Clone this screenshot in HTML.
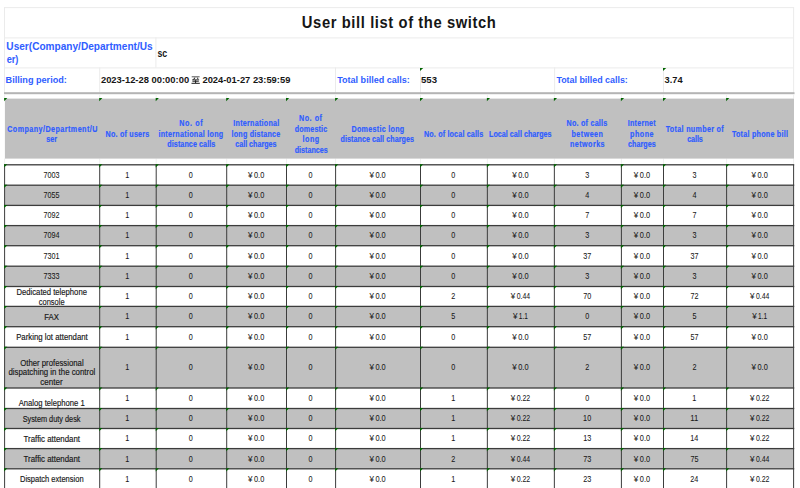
<!DOCTYPE html><html><head><meta charset="utf-8"><style>html,body{margin:0;padding:0;background:#fff;width:800px;height:488px;overflow:hidden}svg{display:block}text{font-family:"Liberation Sans",sans-serif}</style></head><body>
<svg width="800" height="488" viewBox="0 0 800 488">
<rect x="0" y="0" width="800" height="488" fill="#fff"/>
<rect x="4.50" y="7.10" width="789.10" height="1.00" fill="#ebebeb"/>
<rect x="4.50" y="37.40" width="789.10" height="1.00" fill="#ebebeb"/>
<rect x="4.50" y="67.40" width="789.10" height="1.00" fill="#ebebeb"/>
<rect x="4.00" y="7.00" width="1.00" height="87.00" fill="#ebebeb"/>
<rect x="793.10" y="7.00" width="1.00" height="87.00" fill="#ebebeb"/>
<rect x="155.40" y="37.50" width="1.00" height="30.00" fill="#ebebeb"/>
<rect x="99.20" y="67.50" width="1.00" height="25.50" fill="#ebebeb"/>
<rect x="335.00" y="67.50" width="1.00" height="25.50" fill="#ebebeb"/>
<rect x="420.00" y="67.50" width="1.00" height="25.50" fill="#ebebeb"/>
<rect x="554.10" y="67.50" width="1.00" height="25.50" fill="#ebebeb"/>
<rect x="663.00" y="67.50" width="1.00" height="25.50" fill="#ebebeb"/>
<rect x="4.00" y="92.20" width="790.50" height="2.00" fill="#b4b4b4"/>
<rect x="4.10" y="94.00" width="1.00" height="4.50" fill="#efefef"/>
<rect x="4.10" y="158.50" width="1.00" height="6.00" fill="#efefef"/>
<rect x="99.20" y="94.00" width="1.00" height="4.50" fill="#efefef"/>
<rect x="99.20" y="158.50" width="1.00" height="6.00" fill="#efefef"/>
<rect x="155.70" y="94.00" width="1.00" height="4.50" fill="#efefef"/>
<rect x="155.70" y="158.50" width="1.00" height="6.00" fill="#efefef"/>
<rect x="226.20" y="94.00" width="1.00" height="4.50" fill="#efefef"/>
<rect x="226.20" y="158.50" width="1.00" height="6.00" fill="#efefef"/>
<rect x="286.00" y="94.00" width="1.00" height="4.50" fill="#efefef"/>
<rect x="286.00" y="158.50" width="1.00" height="6.00" fill="#efefef"/>
<rect x="335.10" y="94.00" width="1.00" height="4.50" fill="#efefef"/>
<rect x="335.10" y="158.50" width="1.00" height="6.00" fill="#efefef"/>
<rect x="420.00" y="94.00" width="1.00" height="4.50" fill="#efefef"/>
<rect x="420.00" y="158.50" width="1.00" height="6.00" fill="#efefef"/>
<rect x="486.85" y="94.00" width="1.00" height="4.50" fill="#efefef"/>
<rect x="486.85" y="158.50" width="1.00" height="6.00" fill="#efefef"/>
<rect x="553.85" y="94.00" width="1.00" height="4.50" fill="#efefef"/>
<rect x="553.85" y="158.50" width="1.00" height="6.00" fill="#efefef"/>
<rect x="620.90" y="94.00" width="1.00" height="4.50" fill="#efefef"/>
<rect x="620.90" y="158.50" width="1.00" height="6.00" fill="#efefef"/>
<rect x="663.00" y="94.00" width="1.00" height="4.50" fill="#efefef"/>
<rect x="663.00" y="158.50" width="1.00" height="6.00" fill="#efefef"/>
<rect x="726.10" y="94.00" width="1.00" height="4.50" fill="#efefef"/>
<rect x="726.10" y="158.50" width="1.00" height="6.00" fill="#efefef"/>
<rect x="793.10" y="94.00" width="1.00" height="4.50" fill="#efefef"/>
<rect x="793.10" y="158.50" width="1.00" height="6.00" fill="#efefef"/>
<rect x="4.9" y="98.6" width="789.10" height="60.00" fill="#c0c0c0"/>
<rect x="4.60" y="164.80" width="789.00" height="20.40" fill="#ffffff"/>
<rect x="4.60" y="185.20" width="789.00" height="20.20" fill="#c0c0c0"/>
<rect x="4.60" y="205.40" width="789.00" height="20.20" fill="#ffffff"/>
<rect x="4.60" y="225.60" width="789.00" height="20.10" fill="#c0c0c0"/>
<rect x="4.60" y="245.70" width="789.00" height="20.50" fill="#ffffff"/>
<rect x="4.60" y="266.20" width="789.00" height="20.30" fill="#c0c0c0"/>
<rect x="4.60" y="286.50" width="789.00" height="19.90" fill="#ffffff"/>
<rect x="4.60" y="306.40" width="789.00" height="20.30" fill="#c0c0c0"/>
<rect x="4.60" y="326.70" width="789.00" height="20.60" fill="#ffffff"/>
<rect x="4.60" y="347.30" width="789.00" height="40.70" fill="#c0c0c0"/>
<rect x="4.60" y="388.00" width="789.00" height="20.50" fill="#ffffff"/>
<rect x="4.60" y="408.50" width="789.00" height="20.00" fill="#c0c0c0"/>
<rect x="4.60" y="428.50" width="789.00" height="20.10" fill="#ffffff"/>
<rect x="4.60" y="448.60" width="789.00" height="20.20" fill="#c0c0c0"/>
<rect x="4.60" y="468.80" width="789.00" height="20.20" fill="#ffffff"/>
<rect x="4.00" y="164.15" width="790.20" height="1.30" fill="#3c3c3c"/>
<rect x="4.00" y="184.55" width="790.20" height="1.30" fill="#3c3c3c"/>
<rect x="4.00" y="204.75" width="790.20" height="1.30" fill="#3c3c3c"/>
<rect x="4.00" y="224.95" width="790.20" height="1.30" fill="#3c3c3c"/>
<rect x="4.00" y="245.05" width="790.20" height="1.30" fill="#3c3c3c"/>
<rect x="4.00" y="265.55" width="790.20" height="1.30" fill="#3c3c3c"/>
<rect x="4.00" y="285.85" width="790.20" height="1.30" fill="#3c3c3c"/>
<rect x="4.00" y="305.75" width="790.20" height="1.30" fill="#3c3c3c"/>
<rect x="4.00" y="326.05" width="790.20" height="1.30" fill="#3c3c3c"/>
<rect x="4.00" y="346.65" width="790.20" height="1.30" fill="#3c3c3c"/>
<rect x="4.00" y="387.35" width="790.20" height="1.30" fill="#3c3c3c"/>
<rect x="4.00" y="407.85" width="790.20" height="1.30" fill="#3c3c3c"/>
<rect x="4.00" y="427.85" width="790.20" height="1.30" fill="#3c3c3c"/>
<rect x="4.00" y="447.95" width="790.20" height="1.30" fill="#3c3c3c"/>
<rect x="4.00" y="468.15" width="790.20" height="1.30" fill="#3c3c3c"/>
<rect x="4.00" y="488.35" width="790.20" height="1.30" fill="#3c3c3c"/>
<rect x="4.10" y="164.80" width="1.00" height="323.20" fill="#3c3c3c"/>
<rect x="99.20" y="164.80" width="1.00" height="323.20" fill="#3c3c3c"/>
<rect x="155.70" y="164.80" width="1.00" height="323.20" fill="#3c3c3c"/>
<rect x="226.20" y="164.80" width="1.00" height="323.20" fill="#3c3c3c"/>
<rect x="286.00" y="164.80" width="1.00" height="323.20" fill="#3c3c3c"/>
<rect x="335.10" y="164.80" width="1.00" height="323.20" fill="#3c3c3c"/>
<rect x="420.00" y="164.80" width="1.00" height="323.20" fill="#3c3c3c"/>
<rect x="486.85" y="164.80" width="1.00" height="323.20" fill="#3c3c3c"/>
<rect x="553.85" y="164.80" width="1.00" height="323.20" fill="#3c3c3c"/>
<rect x="620.90" y="164.80" width="1.00" height="323.20" fill="#3c3c3c"/>
<rect x="663.00" y="164.80" width="1.00" height="323.20" fill="#3c3c3c"/>
<rect x="726.10" y="164.80" width="1.00" height="323.20" fill="#3c3c3c"/>
<rect x="793.10" y="164.80" width="1.00" height="323.20" fill="#3c3c3c"/>
<path d="M4.10 98.10h3.2l-3.2 3.2z" fill="#006400"/>
<path d="M4.10 164.30h3.2l-3.2 3.2z" fill="#006400"/>
<path d="M4.10 184.70h3.2l-3.2 3.2z" fill="#006400"/>
<path d="M4.10 204.90h3.2l-3.2 3.2z" fill="#006400"/>
<path d="M4.10 225.10h3.2l-3.2 3.2z" fill="#006400"/>
<path d="M4.10 245.20h3.2l-3.2 3.2z" fill="#006400"/>
<path d="M4.10 265.70h3.2l-3.2 3.2z" fill="#006400"/>
<path d="M4.10 286.00h3.2l-3.2 3.2z" fill="#006400"/>
<path d="M4.10 305.90h3.2l-3.2 3.2z" fill="#006400"/>
<path d="M4.10 326.20h3.2l-3.2 3.2z" fill="#006400"/>
<path d="M4.10 346.80h3.2l-3.2 3.2z" fill="#006400"/>
<path d="M4.10 387.50h3.2l-3.2 3.2z" fill="#006400"/>
<path d="M4.10 408.00h3.2l-3.2 3.2z" fill="#006400"/>
<path d="M4.10 428.00h3.2l-3.2 3.2z" fill="#006400"/>
<path d="M4.10 448.10h3.2l-3.2 3.2z" fill="#006400"/>
<path d="M4.10 468.30h3.2l-3.2 3.2z" fill="#006400"/>
<path d="M99.20 98.10h3.2l-3.2 3.2z" fill="#006400"/>
<path d="M99.20 164.30h3.2l-3.2 3.2z" fill="#006400"/>
<path d="M99.20 184.70h3.2l-3.2 3.2z" fill="#006400"/>
<path d="M99.20 204.90h3.2l-3.2 3.2z" fill="#006400"/>
<path d="M99.20 225.10h3.2l-3.2 3.2z" fill="#006400"/>
<path d="M99.20 245.20h3.2l-3.2 3.2z" fill="#006400"/>
<path d="M99.20 265.70h3.2l-3.2 3.2z" fill="#006400"/>
<path d="M99.20 286.00h3.2l-3.2 3.2z" fill="#006400"/>
<path d="M99.20 305.90h3.2l-3.2 3.2z" fill="#006400"/>
<path d="M99.20 326.20h3.2l-3.2 3.2z" fill="#006400"/>
<path d="M99.20 346.80h3.2l-3.2 3.2z" fill="#006400"/>
<path d="M99.20 387.50h3.2l-3.2 3.2z" fill="#006400"/>
<path d="M99.20 408.00h3.2l-3.2 3.2z" fill="#006400"/>
<path d="M99.20 428.00h3.2l-3.2 3.2z" fill="#006400"/>
<path d="M99.20 448.10h3.2l-3.2 3.2z" fill="#006400"/>
<path d="M99.20 468.30h3.2l-3.2 3.2z" fill="#006400"/>
<path d="M155.70 98.10h3.2l-3.2 3.2z" fill="#006400"/>
<path d="M155.70 164.30h3.2l-3.2 3.2z" fill="#006400"/>
<path d="M155.70 184.70h3.2l-3.2 3.2z" fill="#006400"/>
<path d="M155.70 204.90h3.2l-3.2 3.2z" fill="#006400"/>
<path d="M155.70 225.10h3.2l-3.2 3.2z" fill="#006400"/>
<path d="M155.70 245.20h3.2l-3.2 3.2z" fill="#006400"/>
<path d="M155.70 265.70h3.2l-3.2 3.2z" fill="#006400"/>
<path d="M155.70 286.00h3.2l-3.2 3.2z" fill="#006400"/>
<path d="M155.70 305.90h3.2l-3.2 3.2z" fill="#006400"/>
<path d="M155.70 326.20h3.2l-3.2 3.2z" fill="#006400"/>
<path d="M155.70 346.80h3.2l-3.2 3.2z" fill="#006400"/>
<path d="M155.70 387.50h3.2l-3.2 3.2z" fill="#006400"/>
<path d="M155.70 408.00h3.2l-3.2 3.2z" fill="#006400"/>
<path d="M155.70 428.00h3.2l-3.2 3.2z" fill="#006400"/>
<path d="M155.70 448.10h3.2l-3.2 3.2z" fill="#006400"/>
<path d="M155.70 468.30h3.2l-3.2 3.2z" fill="#006400"/>
<path d="M226.20 98.10h3.2l-3.2 3.2z" fill="#006400"/>
<path d="M226.20 164.30h3.2l-3.2 3.2z" fill="#006400"/>
<path d="M226.20 184.70h3.2l-3.2 3.2z" fill="#006400"/>
<path d="M226.20 204.90h3.2l-3.2 3.2z" fill="#006400"/>
<path d="M226.20 225.10h3.2l-3.2 3.2z" fill="#006400"/>
<path d="M226.20 245.20h3.2l-3.2 3.2z" fill="#006400"/>
<path d="M226.20 265.70h3.2l-3.2 3.2z" fill="#006400"/>
<path d="M226.20 286.00h3.2l-3.2 3.2z" fill="#006400"/>
<path d="M226.20 305.90h3.2l-3.2 3.2z" fill="#006400"/>
<path d="M226.20 326.20h3.2l-3.2 3.2z" fill="#006400"/>
<path d="M226.20 346.80h3.2l-3.2 3.2z" fill="#006400"/>
<path d="M226.20 387.50h3.2l-3.2 3.2z" fill="#006400"/>
<path d="M226.20 408.00h3.2l-3.2 3.2z" fill="#006400"/>
<path d="M226.20 428.00h3.2l-3.2 3.2z" fill="#006400"/>
<path d="M226.20 448.10h3.2l-3.2 3.2z" fill="#006400"/>
<path d="M226.20 468.30h3.2l-3.2 3.2z" fill="#006400"/>
<path d="M286.00 98.10h3.2l-3.2 3.2z" fill="#006400"/>
<path d="M286.00 164.30h3.2l-3.2 3.2z" fill="#006400"/>
<path d="M286.00 184.70h3.2l-3.2 3.2z" fill="#006400"/>
<path d="M286.00 204.90h3.2l-3.2 3.2z" fill="#006400"/>
<path d="M286.00 225.10h3.2l-3.2 3.2z" fill="#006400"/>
<path d="M286.00 245.20h3.2l-3.2 3.2z" fill="#006400"/>
<path d="M286.00 265.70h3.2l-3.2 3.2z" fill="#006400"/>
<path d="M286.00 286.00h3.2l-3.2 3.2z" fill="#006400"/>
<path d="M286.00 305.90h3.2l-3.2 3.2z" fill="#006400"/>
<path d="M286.00 326.20h3.2l-3.2 3.2z" fill="#006400"/>
<path d="M286.00 346.80h3.2l-3.2 3.2z" fill="#006400"/>
<path d="M286.00 387.50h3.2l-3.2 3.2z" fill="#006400"/>
<path d="M286.00 408.00h3.2l-3.2 3.2z" fill="#006400"/>
<path d="M286.00 428.00h3.2l-3.2 3.2z" fill="#006400"/>
<path d="M286.00 448.10h3.2l-3.2 3.2z" fill="#006400"/>
<path d="M286.00 468.30h3.2l-3.2 3.2z" fill="#006400"/>
<path d="M335.10 98.10h3.2l-3.2 3.2z" fill="#006400"/>
<path d="M335.10 164.30h3.2l-3.2 3.2z" fill="#006400"/>
<path d="M335.10 184.70h3.2l-3.2 3.2z" fill="#006400"/>
<path d="M335.10 204.90h3.2l-3.2 3.2z" fill="#006400"/>
<path d="M335.10 225.10h3.2l-3.2 3.2z" fill="#006400"/>
<path d="M335.10 245.20h3.2l-3.2 3.2z" fill="#006400"/>
<path d="M335.10 265.70h3.2l-3.2 3.2z" fill="#006400"/>
<path d="M335.10 286.00h3.2l-3.2 3.2z" fill="#006400"/>
<path d="M335.10 305.90h3.2l-3.2 3.2z" fill="#006400"/>
<path d="M335.10 326.20h3.2l-3.2 3.2z" fill="#006400"/>
<path d="M335.10 346.80h3.2l-3.2 3.2z" fill="#006400"/>
<path d="M335.10 387.50h3.2l-3.2 3.2z" fill="#006400"/>
<path d="M335.10 408.00h3.2l-3.2 3.2z" fill="#006400"/>
<path d="M335.10 428.00h3.2l-3.2 3.2z" fill="#006400"/>
<path d="M335.10 448.10h3.2l-3.2 3.2z" fill="#006400"/>
<path d="M335.10 468.30h3.2l-3.2 3.2z" fill="#006400"/>
<path d="M420.00 98.10h3.2l-3.2 3.2z" fill="#006400"/>
<path d="M420.00 164.30h3.2l-3.2 3.2z" fill="#006400"/>
<path d="M420.00 184.70h3.2l-3.2 3.2z" fill="#006400"/>
<path d="M420.00 204.90h3.2l-3.2 3.2z" fill="#006400"/>
<path d="M420.00 225.10h3.2l-3.2 3.2z" fill="#006400"/>
<path d="M420.00 245.20h3.2l-3.2 3.2z" fill="#006400"/>
<path d="M420.00 265.70h3.2l-3.2 3.2z" fill="#006400"/>
<path d="M420.00 286.00h3.2l-3.2 3.2z" fill="#006400"/>
<path d="M420.00 305.90h3.2l-3.2 3.2z" fill="#006400"/>
<path d="M420.00 326.20h3.2l-3.2 3.2z" fill="#006400"/>
<path d="M420.00 346.80h3.2l-3.2 3.2z" fill="#006400"/>
<path d="M420.00 387.50h3.2l-3.2 3.2z" fill="#006400"/>
<path d="M420.00 408.00h3.2l-3.2 3.2z" fill="#006400"/>
<path d="M420.00 428.00h3.2l-3.2 3.2z" fill="#006400"/>
<path d="M420.00 448.10h3.2l-3.2 3.2z" fill="#006400"/>
<path d="M420.00 468.30h3.2l-3.2 3.2z" fill="#006400"/>
<path d="M486.85 98.10h3.2l-3.2 3.2z" fill="#006400"/>
<path d="M486.85 164.30h3.2l-3.2 3.2z" fill="#006400"/>
<path d="M486.85 184.70h3.2l-3.2 3.2z" fill="#006400"/>
<path d="M486.85 204.90h3.2l-3.2 3.2z" fill="#006400"/>
<path d="M486.85 225.10h3.2l-3.2 3.2z" fill="#006400"/>
<path d="M486.85 245.20h3.2l-3.2 3.2z" fill="#006400"/>
<path d="M486.85 265.70h3.2l-3.2 3.2z" fill="#006400"/>
<path d="M486.85 286.00h3.2l-3.2 3.2z" fill="#006400"/>
<path d="M486.85 305.90h3.2l-3.2 3.2z" fill="#006400"/>
<path d="M486.85 326.20h3.2l-3.2 3.2z" fill="#006400"/>
<path d="M486.85 346.80h3.2l-3.2 3.2z" fill="#006400"/>
<path d="M486.85 387.50h3.2l-3.2 3.2z" fill="#006400"/>
<path d="M486.85 408.00h3.2l-3.2 3.2z" fill="#006400"/>
<path d="M486.85 428.00h3.2l-3.2 3.2z" fill="#006400"/>
<path d="M486.85 448.10h3.2l-3.2 3.2z" fill="#006400"/>
<path d="M486.85 468.30h3.2l-3.2 3.2z" fill="#006400"/>
<path d="M553.85 98.10h3.2l-3.2 3.2z" fill="#006400"/>
<path d="M553.85 164.30h3.2l-3.2 3.2z" fill="#006400"/>
<path d="M553.85 184.70h3.2l-3.2 3.2z" fill="#006400"/>
<path d="M553.85 204.90h3.2l-3.2 3.2z" fill="#006400"/>
<path d="M553.85 225.10h3.2l-3.2 3.2z" fill="#006400"/>
<path d="M553.85 245.20h3.2l-3.2 3.2z" fill="#006400"/>
<path d="M553.85 265.70h3.2l-3.2 3.2z" fill="#006400"/>
<path d="M553.85 286.00h3.2l-3.2 3.2z" fill="#006400"/>
<path d="M553.85 305.90h3.2l-3.2 3.2z" fill="#006400"/>
<path d="M553.85 326.20h3.2l-3.2 3.2z" fill="#006400"/>
<path d="M553.85 346.80h3.2l-3.2 3.2z" fill="#006400"/>
<path d="M553.85 387.50h3.2l-3.2 3.2z" fill="#006400"/>
<path d="M553.85 408.00h3.2l-3.2 3.2z" fill="#006400"/>
<path d="M553.85 428.00h3.2l-3.2 3.2z" fill="#006400"/>
<path d="M553.85 448.10h3.2l-3.2 3.2z" fill="#006400"/>
<path d="M553.85 468.30h3.2l-3.2 3.2z" fill="#006400"/>
<path d="M620.90 98.10h3.2l-3.2 3.2z" fill="#006400"/>
<path d="M620.90 164.30h3.2l-3.2 3.2z" fill="#006400"/>
<path d="M620.90 184.70h3.2l-3.2 3.2z" fill="#006400"/>
<path d="M620.90 204.90h3.2l-3.2 3.2z" fill="#006400"/>
<path d="M620.90 225.10h3.2l-3.2 3.2z" fill="#006400"/>
<path d="M620.90 245.20h3.2l-3.2 3.2z" fill="#006400"/>
<path d="M620.90 265.70h3.2l-3.2 3.2z" fill="#006400"/>
<path d="M620.90 286.00h3.2l-3.2 3.2z" fill="#006400"/>
<path d="M620.90 305.90h3.2l-3.2 3.2z" fill="#006400"/>
<path d="M620.90 326.20h3.2l-3.2 3.2z" fill="#006400"/>
<path d="M620.90 346.80h3.2l-3.2 3.2z" fill="#006400"/>
<path d="M620.90 387.50h3.2l-3.2 3.2z" fill="#006400"/>
<path d="M620.90 408.00h3.2l-3.2 3.2z" fill="#006400"/>
<path d="M620.90 428.00h3.2l-3.2 3.2z" fill="#006400"/>
<path d="M620.90 448.10h3.2l-3.2 3.2z" fill="#006400"/>
<path d="M620.90 468.30h3.2l-3.2 3.2z" fill="#006400"/>
<path d="M663.00 98.10h3.2l-3.2 3.2z" fill="#006400"/>
<path d="M663.00 164.30h3.2l-3.2 3.2z" fill="#006400"/>
<path d="M663.00 184.70h3.2l-3.2 3.2z" fill="#006400"/>
<path d="M663.00 204.90h3.2l-3.2 3.2z" fill="#006400"/>
<path d="M663.00 225.10h3.2l-3.2 3.2z" fill="#006400"/>
<path d="M663.00 245.20h3.2l-3.2 3.2z" fill="#006400"/>
<path d="M663.00 265.70h3.2l-3.2 3.2z" fill="#006400"/>
<path d="M663.00 286.00h3.2l-3.2 3.2z" fill="#006400"/>
<path d="M663.00 305.90h3.2l-3.2 3.2z" fill="#006400"/>
<path d="M663.00 326.20h3.2l-3.2 3.2z" fill="#006400"/>
<path d="M663.00 346.80h3.2l-3.2 3.2z" fill="#006400"/>
<path d="M663.00 387.50h3.2l-3.2 3.2z" fill="#006400"/>
<path d="M663.00 408.00h3.2l-3.2 3.2z" fill="#006400"/>
<path d="M663.00 428.00h3.2l-3.2 3.2z" fill="#006400"/>
<path d="M663.00 448.10h3.2l-3.2 3.2z" fill="#006400"/>
<path d="M663.00 468.30h3.2l-3.2 3.2z" fill="#006400"/>
<path d="M726.10 98.10h3.2l-3.2 3.2z" fill="#006400"/>
<path d="M726.10 164.30h3.2l-3.2 3.2z" fill="#006400"/>
<path d="M726.10 184.70h3.2l-3.2 3.2z" fill="#006400"/>
<path d="M726.10 204.90h3.2l-3.2 3.2z" fill="#006400"/>
<path d="M726.10 225.10h3.2l-3.2 3.2z" fill="#006400"/>
<path d="M726.10 245.20h3.2l-3.2 3.2z" fill="#006400"/>
<path d="M726.10 265.70h3.2l-3.2 3.2z" fill="#006400"/>
<path d="M726.10 286.00h3.2l-3.2 3.2z" fill="#006400"/>
<path d="M726.10 305.90h3.2l-3.2 3.2z" fill="#006400"/>
<path d="M726.10 326.20h3.2l-3.2 3.2z" fill="#006400"/>
<path d="M726.10 346.80h3.2l-3.2 3.2z" fill="#006400"/>
<path d="M726.10 387.50h3.2l-3.2 3.2z" fill="#006400"/>
<path d="M726.10 408.00h3.2l-3.2 3.2z" fill="#006400"/>
<path d="M726.10 428.00h3.2l-3.2 3.2z" fill="#006400"/>
<path d="M726.10 448.10h3.2l-3.2 3.2z" fill="#006400"/>
<path d="M726.10 468.30h3.2l-3.2 3.2z" fill="#006400"/>
<path d="M420.00 67.90h3.2l-3.2 3.2z" fill="#006400"/>
<path d="M663.00 67.90h3.2l-3.2 3.2z" fill="#006400"/>
<text transform="translate(301.86 27.80) scale(0.9 1)" x="0" y="0" font-size="16.4" font-weight="bold" fill="#161616" letter-spacing="0.662">User bill list of the switch</text>
<text x="6.39" y="49.50" font-size="10" font-weight="bold" fill="#2f5dff" textLength="146.22" lengthAdjust="spacingAndGlyphs">User(Company/Department/Us</text>
<text x="6.64" y="62.80" font-size="10" font-weight="bold" fill="#2f5dff" textLength="11.82" lengthAdjust="spacingAndGlyphs">er)</text>
<text x="157.49" y="56.80" font-size="10" font-weight="bold" fill="#161616" textLength="9.77" lengthAdjust="spacingAndGlyphs">sc</text>
<text x="5.64" y="82.90" font-size="9" font-weight="bold" fill="#2f5dff" textLength="61.24" lengthAdjust="spacingAndGlyphs">Billing period:</text>
<text x="100.92" y="82.90" font-size="9.4" font-weight="bold" fill="#161616" textLength="88.21" lengthAdjust="spacingAndGlyphs">2023-12-28 00:00:00</text>
<g fill="#1a1a1a"><rect x="191.7" y="76.3" width="7.9" height="1.0" fill="#555"/><path d="M194.6 77.4l0.9 0.3l-1.6 2.0l-0.9-0.2z"/><path d="M196.7 77.8l0.8-0.3l1.1 1.5l-0.8 0.3z"/><rect x="192.2" y="79.4" width="6.9" height="1.0"/><rect x="192.4" y="80.9" width="6.4" height="0.8"/><rect x="195.1" y="80.2" width="1.0" height="2.8"/><rect x="191.5" y="82.8" width="8.3" height="1.0"/></g>
<text x="202.43" y="82.90" font-size="9.4" font-weight="bold" fill="#161616" textLength="87.92" lengthAdjust="spacingAndGlyphs">2024-01-27 23:59:59</text>
<text x="337.20" y="82.90" font-size="9" font-weight="bold" fill="#2f5dff" textLength="72.66" lengthAdjust="spacingAndGlyphs">Total billed calls:</text>
<text x="421.00" y="82.90" font-size="9" font-weight="bold" fill="#161616" textLength="16.04" lengthAdjust="spacingAndGlyphs">553</text>
<text x="556.40" y="82.90" font-size="9" font-weight="bold" fill="#2f5dff" textLength="71.45" lengthAdjust="spacingAndGlyphs">Total billed calls:</text>
<text x="664.59" y="82.90" font-size="9" font-weight="bold" fill="#161616" textLength="18.06" lengthAdjust="spacingAndGlyphs">3.74</text>
<text transform="translate(7.21 131.50) scale(0.86 1)" x="0" y="0" font-size="8.3" font-weight="bold" fill="#2f5dff" letter-spacing="0.546" stroke="#2f5dff" stroke-width="0.2">Company/Department/U</text>
<text transform="translate(46.35 142.10) scale(0.86 1)" x="0" y="0" font-size="8.3" font-weight="bold" fill="#2f5dff" letter-spacing="-0.034" stroke="#2f5dff" stroke-width="0.2">ser</text>
<text transform="translate(105.62 136.80) scale(0.86 1)" x="0" y="0" font-size="8.3" font-weight="bold" fill="#2f5dff" letter-spacing="0.256" stroke="#2f5dff" stroke-width="0.2">No. of users</text>
<text transform="translate(179.22 126.20) scale(0.86 1)" x="0" y="0" font-size="8.3" font-weight="bold" fill="#2f5dff" letter-spacing="0.755" stroke="#2f5dff" stroke-width="0.2">No. of</text>
<text transform="translate(158.40 136.80) scale(0.86 1)" x="0" y="0" font-size="8.3" font-weight="bold" fill="#2f5dff" letter-spacing="0.342" stroke="#2f5dff" stroke-width="0.2">international long</text>
<text transform="translate(167.31 147.40) scale(0.86 1)" x="0" y="0" font-size="8.3" font-weight="bold" fill="#2f5dff" letter-spacing="0.104" stroke="#2f5dff" stroke-width="0.2">distance calls</text>
<text transform="translate(233.27 126.20) scale(0.86 1)" x="0" y="0" font-size="8.3" font-weight="bold" fill="#2f5dff" letter-spacing="0.305" stroke="#2f5dff" stroke-width="0.2">International</text>
<text transform="translate(231.50 136.80) scale(0.86 1)" x="0" y="0" font-size="8.3" font-weight="bold" fill="#2f5dff" letter-spacing="0.265" stroke="#2f5dff" stroke-width="0.2">long distance</text>
<text transform="translate(235.22 147.40) scale(0.86 1)" x="0" y="0" font-size="8.3" font-weight="bold" fill="#2f5dff" letter-spacing="0.006" stroke="#2f5dff" stroke-width="0.2">call charges</text>
<text transform="translate(299.02 120.90) scale(0.86 1)" x="0" y="0" font-size="8.3" font-weight="bold" fill="#2f5dff" letter-spacing="0.638" stroke="#2f5dff" stroke-width="0.2">No. of</text>
<text transform="translate(294.71 131.50) scale(0.86 1)" x="0" y="0" font-size="8.3" font-weight="bold" fill="#2f5dff" letter-spacing="0.194" stroke="#2f5dff" stroke-width="0.2">domestic</text>
<text transform="translate(302.50 142.10) scale(0.86 1)" x="0" y="0" font-size="8.3" font-weight="bold" fill="#2f5dff" letter-spacing="0.644" stroke="#2f5dff" stroke-width="0.2">long</text>
<text transform="translate(294.71 152.70) scale(0.86 1)" x="0" y="0" font-size="8.3" font-weight="bold" fill="#2f5dff" letter-spacing="0.023" stroke="#2f5dff" stroke-width="0.2">distances</text>
<text transform="translate(351.52 131.50) scale(0.86 1)" x="0" y="0" font-size="8.3" font-weight="bold" fill="#2f5dff" letter-spacing="0.342" stroke="#2f5dff" stroke-width="0.2">Domestic long</text>
<text transform="translate(340.46 142.10) scale(0.86 1)" x="0" y="0" font-size="8.3" font-weight="bold" fill="#2f5dff" letter-spacing="0.080" stroke="#2f5dff" stroke-width="0.2">distance call charges</text>
<text transform="translate(424.02 136.80) scale(0.86 1)" x="0" y="0" font-size="8.3" font-weight="bold" fill="#2f5dff" letter-spacing="0.201" stroke="#2f5dff" stroke-width="0.2">No. of local calls</text>
<text transform="translate(489.02 136.80) scale(0.86 1)" x="0" y="0" font-size="8.3" font-weight="bold" fill="#2f5dff" letter-spacing="0.043" stroke="#2f5dff" stroke-width="0.2">Local call charges</text>
<text transform="translate(566.52 126.20) scale(0.86 1)" x="0" y="0" font-size="8.3" font-weight="bold" fill="#2f5dff" letter-spacing="0.285" stroke="#2f5dff" stroke-width="0.2">No. of calls</text>
<text transform="translate(571.53 136.80) scale(0.86 1)" x="0" y="0" font-size="8.3" font-weight="bold" fill="#2f5dff" letter-spacing="0.553" stroke="#2f5dff" stroke-width="0.2">between</text>
<text transform="translate(570.03 147.40) scale(0.86 1)" x="0" y="0" font-size="8.3" font-weight="bold" fill="#2f5dff" letter-spacing="0.528" stroke="#2f5dff" stroke-width="0.2">networks</text>
<text transform="translate(627.77 126.20) scale(0.86 1)" x="0" y="0" font-size="8.3" font-weight="bold" fill="#2f5dff" letter-spacing="0.272" stroke="#2f5dff" stroke-width="0.2">Internet</text>
<text transform="translate(630.03 136.80) scale(0.86 1)" x="0" y="0" font-size="8.3" font-weight="bold" fill="#2f5dff" letter-spacing="0.597" stroke="#2f5dff" stroke-width="0.2">phone</text>
<text transform="translate(627.97 147.40) scale(0.86 1)" x="0" y="0" font-size="8.3" font-weight="bold" fill="#2f5dff" letter-spacing="0.086" stroke="#2f5dff" stroke-width="0.2">charges</text>
<text transform="translate(665.67 131.50) scale(0.86 1)" x="0" y="0" font-size="8.3" font-weight="bold" fill="#2f5dff" letter-spacing="0.385" stroke="#2f5dff" stroke-width="0.2">Total number of</text>
<text transform="translate(687.22 142.10) scale(0.86 1)" x="0" y="0" font-size="8.3" font-weight="bold" fill="#2f5dff" letter-spacing="-0.088" stroke="#2f5dff" stroke-width="0.2">calls</text>
<text transform="translate(731.92 136.80) scale(0.86 1)" x="0" y="0" font-size="8.3" font-weight="bold" fill="#2f5dff" letter-spacing="0.298" stroke="#2f5dff" stroke-width="0.2">Total phone bill</text>
<text x="43.48" y="177.80" font-size="8.2" fill="#161616" textLength="16.09" lengthAdjust="spacingAndGlyphs" stroke="#161616" stroke-width="0.05">7003</text>
<text x="125.24" y="177.80" font-size="8.2" fill="#161616" textLength="4.02" lengthAdjust="spacingAndGlyphs" stroke="#161616" stroke-width="0.05">1</text>
<text x="188.84" y="177.80" font-size="8.2" fill="#161616" textLength="4.02" lengthAdjust="spacingAndGlyphs" stroke="#161616" stroke-width="0.05">0</text>
<text x="248.01" y="177.80" font-size="8.2" fill="#161616" textLength="4.48" lengthAdjust="spacingAndGlyphs" stroke="#161616" stroke-width="0.05">¥</text>
<text x="254.01" y="177.80" font-size="8.2" fill="#161616" textLength="10.28" lengthAdjust="spacingAndGlyphs" stroke="#161616" stroke-width="0.05">0.0</text>
<text x="308.44" y="177.80" font-size="8.2" fill="#161616" textLength="4.02" lengthAdjust="spacingAndGlyphs" stroke="#161616" stroke-width="0.05">0</text>
<text x="369.46" y="177.80" font-size="8.2" fill="#161616" textLength="4.48" lengthAdjust="spacingAndGlyphs" stroke="#161616" stroke-width="0.05">¥</text>
<text x="375.46" y="177.80" font-size="8.2" fill="#161616" textLength="10.28" lengthAdjust="spacingAndGlyphs" stroke="#161616" stroke-width="0.05">0.0</text>
<text x="451.31" y="177.80" font-size="8.2" fill="#161616" textLength="4.02" lengthAdjust="spacingAndGlyphs" stroke="#161616" stroke-width="0.05">0</text>
<text x="512.26" y="177.80" font-size="8.2" fill="#161616" textLength="4.48" lengthAdjust="spacingAndGlyphs" stroke="#161616" stroke-width="0.05">¥</text>
<text x="518.26" y="177.80" font-size="8.2" fill="#161616" textLength="10.28" lengthAdjust="spacingAndGlyphs" stroke="#161616" stroke-width="0.05">0.0</text>
<text x="585.29" y="177.80" font-size="8.2" fill="#161616" textLength="4.02" lengthAdjust="spacingAndGlyphs" stroke="#161616" stroke-width="0.05">3</text>
<text x="633.86" y="177.80" font-size="8.2" fill="#161616" textLength="4.48" lengthAdjust="spacingAndGlyphs" stroke="#161616" stroke-width="0.05">¥</text>
<text x="639.86" y="177.80" font-size="8.2" fill="#161616" textLength="10.28" lengthAdjust="spacingAndGlyphs" stroke="#161616" stroke-width="0.05">0.0</text>
<text x="692.46" y="177.80" font-size="8.2" fill="#161616" textLength="4.02" lengthAdjust="spacingAndGlyphs" stroke="#161616" stroke-width="0.05">3</text>
<text x="751.51" y="177.80" font-size="8.2" fill="#161616" textLength="4.48" lengthAdjust="spacingAndGlyphs" stroke="#161616" stroke-width="0.05">¥</text>
<text x="757.51" y="177.80" font-size="8.2" fill="#161616" textLength="10.28" lengthAdjust="spacingAndGlyphs" stroke="#161616" stroke-width="0.05">0.0</text>
<text x="43.47" y="198.10" font-size="8.2" fill="#161616" textLength="16.09" lengthAdjust="spacingAndGlyphs" stroke="#161616" stroke-width="0.05">7055</text>
<text x="125.24" y="198.10" font-size="8.2" fill="#161616" textLength="4.02" lengthAdjust="spacingAndGlyphs" stroke="#161616" stroke-width="0.05">1</text>
<text x="188.84" y="198.10" font-size="8.2" fill="#161616" textLength="4.02" lengthAdjust="spacingAndGlyphs" stroke="#161616" stroke-width="0.05">0</text>
<text x="248.01" y="198.10" font-size="8.2" fill="#161616" textLength="4.48" lengthAdjust="spacingAndGlyphs" stroke="#161616" stroke-width="0.05">¥</text>
<text x="254.01" y="198.10" font-size="8.2" fill="#161616" textLength="10.28" lengthAdjust="spacingAndGlyphs" stroke="#161616" stroke-width="0.05">0.0</text>
<text x="308.44" y="198.10" font-size="8.2" fill="#161616" textLength="4.02" lengthAdjust="spacingAndGlyphs" stroke="#161616" stroke-width="0.05">0</text>
<text x="369.46" y="198.10" font-size="8.2" fill="#161616" textLength="4.48" lengthAdjust="spacingAndGlyphs" stroke="#161616" stroke-width="0.05">¥</text>
<text x="375.46" y="198.10" font-size="8.2" fill="#161616" textLength="10.28" lengthAdjust="spacingAndGlyphs" stroke="#161616" stroke-width="0.05">0.0</text>
<text x="451.31" y="198.10" font-size="8.2" fill="#161616" textLength="4.02" lengthAdjust="spacingAndGlyphs" stroke="#161616" stroke-width="0.05">0</text>
<text x="512.26" y="198.10" font-size="8.2" fill="#161616" textLength="4.48" lengthAdjust="spacingAndGlyphs" stroke="#161616" stroke-width="0.05">¥</text>
<text x="518.26" y="198.10" font-size="8.2" fill="#161616" textLength="10.28" lengthAdjust="spacingAndGlyphs" stroke="#161616" stroke-width="0.05">0.0</text>
<text x="585.29" y="198.10" font-size="8.2" fill="#161616" textLength="4.02" lengthAdjust="spacingAndGlyphs" stroke="#161616" stroke-width="0.05">4</text>
<text x="633.86" y="198.10" font-size="8.2" fill="#161616" textLength="4.48" lengthAdjust="spacingAndGlyphs" stroke="#161616" stroke-width="0.05">¥</text>
<text x="639.86" y="198.10" font-size="8.2" fill="#161616" textLength="10.28" lengthAdjust="spacingAndGlyphs" stroke="#161616" stroke-width="0.05">0.0</text>
<text x="692.46" y="198.10" font-size="8.2" fill="#161616" textLength="4.02" lengthAdjust="spacingAndGlyphs" stroke="#161616" stroke-width="0.05">4</text>
<text x="751.51" y="198.10" font-size="8.2" fill="#161616" textLength="4.48" lengthAdjust="spacingAndGlyphs" stroke="#161616" stroke-width="0.05">¥</text>
<text x="757.51" y="198.10" font-size="8.2" fill="#161616" textLength="10.28" lengthAdjust="spacingAndGlyphs" stroke="#161616" stroke-width="0.05">0.0</text>
<text x="43.50" y="218.30" font-size="8.2" fill="#161616" textLength="16.09" lengthAdjust="spacingAndGlyphs" stroke="#161616" stroke-width="0.05">7092</text>
<text x="125.24" y="218.30" font-size="8.2" fill="#161616" textLength="4.02" lengthAdjust="spacingAndGlyphs" stroke="#161616" stroke-width="0.05">1</text>
<text x="188.84" y="218.30" font-size="8.2" fill="#161616" textLength="4.02" lengthAdjust="spacingAndGlyphs" stroke="#161616" stroke-width="0.05">0</text>
<text x="248.01" y="218.30" font-size="8.2" fill="#161616" textLength="4.48" lengthAdjust="spacingAndGlyphs" stroke="#161616" stroke-width="0.05">¥</text>
<text x="254.01" y="218.30" font-size="8.2" fill="#161616" textLength="10.28" lengthAdjust="spacingAndGlyphs" stroke="#161616" stroke-width="0.05">0.0</text>
<text x="308.44" y="218.30" font-size="8.2" fill="#161616" textLength="4.02" lengthAdjust="spacingAndGlyphs" stroke="#161616" stroke-width="0.05">0</text>
<text x="369.46" y="218.30" font-size="8.2" fill="#161616" textLength="4.48" lengthAdjust="spacingAndGlyphs" stroke="#161616" stroke-width="0.05">¥</text>
<text x="375.46" y="218.30" font-size="8.2" fill="#161616" textLength="10.28" lengthAdjust="spacingAndGlyphs" stroke="#161616" stroke-width="0.05">0.0</text>
<text x="451.31" y="218.30" font-size="8.2" fill="#161616" textLength="4.02" lengthAdjust="spacingAndGlyphs" stroke="#161616" stroke-width="0.05">0</text>
<text x="512.26" y="218.30" font-size="8.2" fill="#161616" textLength="4.48" lengthAdjust="spacingAndGlyphs" stroke="#161616" stroke-width="0.05">¥</text>
<text x="518.26" y="218.30" font-size="8.2" fill="#161616" textLength="10.28" lengthAdjust="spacingAndGlyphs" stroke="#161616" stroke-width="0.05">0.0</text>
<text x="585.26" y="218.30" font-size="8.2" fill="#161616" textLength="4.02" lengthAdjust="spacingAndGlyphs" stroke="#161616" stroke-width="0.05">7</text>
<text x="633.86" y="218.30" font-size="8.2" fill="#161616" textLength="4.48" lengthAdjust="spacingAndGlyphs" stroke="#161616" stroke-width="0.05">¥</text>
<text x="639.86" y="218.30" font-size="8.2" fill="#161616" textLength="10.28" lengthAdjust="spacingAndGlyphs" stroke="#161616" stroke-width="0.05">0.0</text>
<text x="692.44" y="218.30" font-size="8.2" fill="#161616" textLength="4.02" lengthAdjust="spacingAndGlyphs" stroke="#161616" stroke-width="0.05">7</text>
<text x="751.51" y="218.30" font-size="8.2" fill="#161616" textLength="4.48" lengthAdjust="spacingAndGlyphs" stroke="#161616" stroke-width="0.05">¥</text>
<text x="757.51" y="218.30" font-size="8.2" fill="#161616" textLength="10.28" lengthAdjust="spacingAndGlyphs" stroke="#161616" stroke-width="0.05">0.0</text>
<text x="43.43" y="238.45" font-size="8.2" fill="#161616" textLength="16.09" lengthAdjust="spacingAndGlyphs" stroke="#161616" stroke-width="0.05">7094</text>
<text x="125.24" y="238.45" font-size="8.2" fill="#161616" textLength="4.02" lengthAdjust="spacingAndGlyphs" stroke="#161616" stroke-width="0.05">1</text>
<text x="188.84" y="238.45" font-size="8.2" fill="#161616" textLength="4.02" lengthAdjust="spacingAndGlyphs" stroke="#161616" stroke-width="0.05">0</text>
<text x="248.01" y="238.45" font-size="8.2" fill="#161616" textLength="4.48" lengthAdjust="spacingAndGlyphs" stroke="#161616" stroke-width="0.05">¥</text>
<text x="254.01" y="238.45" font-size="8.2" fill="#161616" textLength="10.28" lengthAdjust="spacingAndGlyphs" stroke="#161616" stroke-width="0.05">0.0</text>
<text x="308.44" y="238.45" font-size="8.2" fill="#161616" textLength="4.02" lengthAdjust="spacingAndGlyphs" stroke="#161616" stroke-width="0.05">0</text>
<text x="369.46" y="238.45" font-size="8.2" fill="#161616" textLength="4.48" lengthAdjust="spacingAndGlyphs" stroke="#161616" stroke-width="0.05">¥</text>
<text x="375.46" y="238.45" font-size="8.2" fill="#161616" textLength="10.28" lengthAdjust="spacingAndGlyphs" stroke="#161616" stroke-width="0.05">0.0</text>
<text x="451.31" y="238.45" font-size="8.2" fill="#161616" textLength="4.02" lengthAdjust="spacingAndGlyphs" stroke="#161616" stroke-width="0.05">0</text>
<text x="512.26" y="238.45" font-size="8.2" fill="#161616" textLength="4.48" lengthAdjust="spacingAndGlyphs" stroke="#161616" stroke-width="0.05">¥</text>
<text x="518.26" y="238.45" font-size="8.2" fill="#161616" textLength="10.28" lengthAdjust="spacingAndGlyphs" stroke="#161616" stroke-width="0.05">0.0</text>
<text x="585.29" y="238.45" font-size="8.2" fill="#161616" textLength="4.02" lengthAdjust="spacingAndGlyphs" stroke="#161616" stroke-width="0.05">3</text>
<text x="633.86" y="238.45" font-size="8.2" fill="#161616" textLength="4.48" lengthAdjust="spacingAndGlyphs" stroke="#161616" stroke-width="0.05">¥</text>
<text x="639.86" y="238.45" font-size="8.2" fill="#161616" textLength="10.28" lengthAdjust="spacingAndGlyphs" stroke="#161616" stroke-width="0.05">0.0</text>
<text x="692.46" y="238.45" font-size="8.2" fill="#161616" textLength="4.02" lengthAdjust="spacingAndGlyphs" stroke="#161616" stroke-width="0.05">3</text>
<text x="751.51" y="238.45" font-size="8.2" fill="#161616" textLength="4.48" lengthAdjust="spacingAndGlyphs" stroke="#161616" stroke-width="0.05">¥</text>
<text x="757.51" y="238.45" font-size="8.2" fill="#161616" textLength="10.28" lengthAdjust="spacingAndGlyphs" stroke="#161616" stroke-width="0.05">0.0</text>
<text x="43.50" y="258.75" font-size="8.2" fill="#161616" textLength="16.09" lengthAdjust="spacingAndGlyphs" stroke="#161616" stroke-width="0.05">7301</text>
<text x="125.24" y="258.75" font-size="8.2" fill="#161616" textLength="4.02" lengthAdjust="spacingAndGlyphs" stroke="#161616" stroke-width="0.05">1</text>
<text x="188.84" y="258.75" font-size="8.2" fill="#161616" textLength="4.02" lengthAdjust="spacingAndGlyphs" stroke="#161616" stroke-width="0.05">0</text>
<text x="248.01" y="258.75" font-size="8.2" fill="#161616" textLength="4.48" lengthAdjust="spacingAndGlyphs" stroke="#161616" stroke-width="0.05">¥</text>
<text x="254.01" y="258.75" font-size="8.2" fill="#161616" textLength="10.28" lengthAdjust="spacingAndGlyphs" stroke="#161616" stroke-width="0.05">0.0</text>
<text x="308.44" y="258.75" font-size="8.2" fill="#161616" textLength="4.02" lengthAdjust="spacingAndGlyphs" stroke="#161616" stroke-width="0.05">0</text>
<text x="369.46" y="258.75" font-size="8.2" fill="#161616" textLength="4.48" lengthAdjust="spacingAndGlyphs" stroke="#161616" stroke-width="0.05">¥</text>
<text x="375.46" y="258.75" font-size="8.2" fill="#161616" textLength="10.28" lengthAdjust="spacingAndGlyphs" stroke="#161616" stroke-width="0.05">0.0</text>
<text x="451.31" y="258.75" font-size="8.2" fill="#161616" textLength="4.02" lengthAdjust="spacingAndGlyphs" stroke="#161616" stroke-width="0.05">0</text>
<text x="512.26" y="258.75" font-size="8.2" fill="#161616" textLength="4.48" lengthAdjust="spacingAndGlyphs" stroke="#161616" stroke-width="0.05">¥</text>
<text x="518.26" y="258.75" font-size="8.2" fill="#161616" textLength="10.28" lengthAdjust="spacingAndGlyphs" stroke="#161616" stroke-width="0.05">0.0</text>
<text x="583.30" y="258.75" font-size="8.2" fill="#161616" textLength="8.04" lengthAdjust="spacingAndGlyphs" stroke="#161616" stroke-width="0.05">37</text>
<text x="633.86" y="258.75" font-size="8.2" fill="#161616" textLength="4.48" lengthAdjust="spacingAndGlyphs" stroke="#161616" stroke-width="0.05">¥</text>
<text x="639.86" y="258.75" font-size="8.2" fill="#161616" textLength="10.28" lengthAdjust="spacingAndGlyphs" stroke="#161616" stroke-width="0.05">0.0</text>
<text x="690.47" y="258.75" font-size="8.2" fill="#161616" textLength="8.04" lengthAdjust="spacingAndGlyphs" stroke="#161616" stroke-width="0.05">37</text>
<text x="751.51" y="258.75" font-size="8.2" fill="#161616" textLength="4.48" lengthAdjust="spacingAndGlyphs" stroke="#161616" stroke-width="0.05">¥</text>
<text x="757.51" y="258.75" font-size="8.2" fill="#161616" textLength="10.28" lengthAdjust="spacingAndGlyphs" stroke="#161616" stroke-width="0.05">0.0</text>
<text x="43.48" y="279.15" font-size="8.2" fill="#161616" textLength="16.09" lengthAdjust="spacingAndGlyphs" stroke="#161616" stroke-width="0.05">7333</text>
<text x="125.24" y="279.15" font-size="8.2" fill="#161616" textLength="4.02" lengthAdjust="spacingAndGlyphs" stroke="#161616" stroke-width="0.05">1</text>
<text x="188.84" y="279.15" font-size="8.2" fill="#161616" textLength="4.02" lengthAdjust="spacingAndGlyphs" stroke="#161616" stroke-width="0.05">0</text>
<text x="248.01" y="279.15" font-size="8.2" fill="#161616" textLength="4.48" lengthAdjust="spacingAndGlyphs" stroke="#161616" stroke-width="0.05">¥</text>
<text x="254.01" y="279.15" font-size="8.2" fill="#161616" textLength="10.28" lengthAdjust="spacingAndGlyphs" stroke="#161616" stroke-width="0.05">0.0</text>
<text x="308.44" y="279.15" font-size="8.2" fill="#161616" textLength="4.02" lengthAdjust="spacingAndGlyphs" stroke="#161616" stroke-width="0.05">0</text>
<text x="369.46" y="279.15" font-size="8.2" fill="#161616" textLength="4.48" lengthAdjust="spacingAndGlyphs" stroke="#161616" stroke-width="0.05">¥</text>
<text x="375.46" y="279.15" font-size="8.2" fill="#161616" textLength="10.28" lengthAdjust="spacingAndGlyphs" stroke="#161616" stroke-width="0.05">0.0</text>
<text x="451.31" y="279.15" font-size="8.2" fill="#161616" textLength="4.02" lengthAdjust="spacingAndGlyphs" stroke="#161616" stroke-width="0.05">0</text>
<text x="512.26" y="279.15" font-size="8.2" fill="#161616" textLength="4.48" lengthAdjust="spacingAndGlyphs" stroke="#161616" stroke-width="0.05">¥</text>
<text x="518.26" y="279.15" font-size="8.2" fill="#161616" textLength="10.28" lengthAdjust="spacingAndGlyphs" stroke="#161616" stroke-width="0.05">0.0</text>
<text x="585.29" y="279.15" font-size="8.2" fill="#161616" textLength="4.02" lengthAdjust="spacingAndGlyphs" stroke="#161616" stroke-width="0.05">3</text>
<text x="633.86" y="279.15" font-size="8.2" fill="#161616" textLength="4.48" lengthAdjust="spacingAndGlyphs" stroke="#161616" stroke-width="0.05">¥</text>
<text x="639.86" y="279.15" font-size="8.2" fill="#161616" textLength="10.28" lengthAdjust="spacingAndGlyphs" stroke="#161616" stroke-width="0.05">0.0</text>
<text x="692.46" y="279.15" font-size="8.2" fill="#161616" textLength="4.02" lengthAdjust="spacingAndGlyphs" stroke="#161616" stroke-width="0.05">3</text>
<text x="751.51" y="279.15" font-size="8.2" fill="#161616" textLength="4.48" lengthAdjust="spacingAndGlyphs" stroke="#161616" stroke-width="0.05">¥</text>
<text x="757.51" y="279.15" font-size="8.2" fill="#161616" textLength="10.28" lengthAdjust="spacingAndGlyphs" stroke="#161616" stroke-width="0.05">0.0</text>
<text x="16.47" y="294.50" font-size="8.4" fill="#161616" textLength="70.47" lengthAdjust="spacingAndGlyphs" stroke="#161616" stroke-width="0.15">Dedicated telephone</text>
<text x="38.78" y="305.00" font-size="8.4" fill="#161616" textLength="25.85" lengthAdjust="spacingAndGlyphs" stroke="#161616" stroke-width="0.15">console</text>
<text x="125.24" y="299.25" font-size="8.2" fill="#161616" textLength="4.02" lengthAdjust="spacingAndGlyphs" stroke="#161616" stroke-width="0.05">1</text>
<text x="188.84" y="299.25" font-size="8.2" fill="#161616" textLength="4.02" lengthAdjust="spacingAndGlyphs" stroke="#161616" stroke-width="0.05">0</text>
<text x="248.01" y="299.25" font-size="8.2" fill="#161616" textLength="4.48" lengthAdjust="spacingAndGlyphs" stroke="#161616" stroke-width="0.05">¥</text>
<text x="254.01" y="299.25" font-size="8.2" fill="#161616" textLength="10.28" lengthAdjust="spacingAndGlyphs" stroke="#161616" stroke-width="0.05">0.0</text>
<text x="308.44" y="299.25" font-size="8.2" fill="#161616" textLength="4.02" lengthAdjust="spacingAndGlyphs" stroke="#161616" stroke-width="0.05">0</text>
<text x="369.46" y="299.25" font-size="8.2" fill="#161616" textLength="4.48" lengthAdjust="spacingAndGlyphs" stroke="#161616" stroke-width="0.05">¥</text>
<text x="375.46" y="299.25" font-size="8.2" fill="#161616" textLength="10.28" lengthAdjust="spacingAndGlyphs" stroke="#161616" stroke-width="0.05">0.0</text>
<text x="451.31" y="299.25" font-size="8.2" fill="#161616" textLength="4.02" lengthAdjust="spacingAndGlyphs" stroke="#161616" stroke-width="0.05">2</text>
<text x="510.63" y="299.25" font-size="8.2" fill="#161616" textLength="4.48" lengthAdjust="spacingAndGlyphs" stroke="#161616" stroke-width="0.05">¥</text>
<text x="516.66" y="299.25" font-size="8.2" fill="#161616" textLength="13.42" lengthAdjust="spacingAndGlyphs" stroke="#161616" stroke-width="0.05">0.44</text>
<text x="583.21" y="299.25" font-size="8.2" fill="#161616" textLength="8.04" lengthAdjust="spacingAndGlyphs" stroke="#161616" stroke-width="0.05">70</text>
<text x="633.86" y="299.25" font-size="8.2" fill="#161616" textLength="4.48" lengthAdjust="spacingAndGlyphs" stroke="#161616" stroke-width="0.05">¥</text>
<text x="639.86" y="299.25" font-size="8.2" fill="#161616" textLength="10.28" lengthAdjust="spacingAndGlyphs" stroke="#161616" stroke-width="0.05">0.0</text>
<text x="690.42" y="299.25" font-size="8.2" fill="#161616" textLength="8.04" lengthAdjust="spacingAndGlyphs" stroke="#161616" stroke-width="0.05">72</text>
<text x="749.88" y="299.25" font-size="8.2" fill="#161616" textLength="4.48" lengthAdjust="spacingAndGlyphs" stroke="#161616" stroke-width="0.05">¥</text>
<text x="755.91" y="299.25" font-size="8.2" fill="#161616" textLength="13.42" lengthAdjust="spacingAndGlyphs" stroke="#161616" stroke-width="0.05">0.44</text>
<text x="44.28" y="319.95" font-size="8.2" fill="#161616" textLength="14.68" lengthAdjust="spacingAndGlyphs" stroke="#161616" stroke-width="0.15">FAX</text>
<text x="125.24" y="319.35" font-size="8.2" fill="#161616" textLength="4.02" lengthAdjust="spacingAndGlyphs" stroke="#161616" stroke-width="0.05">1</text>
<text x="188.84" y="319.35" font-size="8.2" fill="#161616" textLength="4.02" lengthAdjust="spacingAndGlyphs" stroke="#161616" stroke-width="0.05">0</text>
<text x="248.01" y="319.35" font-size="8.2" fill="#161616" textLength="4.48" lengthAdjust="spacingAndGlyphs" stroke="#161616" stroke-width="0.05">¥</text>
<text x="254.01" y="319.35" font-size="8.2" fill="#161616" textLength="10.28" lengthAdjust="spacingAndGlyphs" stroke="#161616" stroke-width="0.05">0.0</text>
<text x="308.44" y="319.35" font-size="8.2" fill="#161616" textLength="4.02" lengthAdjust="spacingAndGlyphs" stroke="#161616" stroke-width="0.05">0</text>
<text x="369.46" y="319.35" font-size="8.2" fill="#161616" textLength="4.48" lengthAdjust="spacingAndGlyphs" stroke="#161616" stroke-width="0.05">¥</text>
<text x="375.46" y="319.35" font-size="8.2" fill="#161616" textLength="10.28" lengthAdjust="spacingAndGlyphs" stroke="#161616" stroke-width="0.05">0.0</text>
<text x="451.32" y="319.35" font-size="8.2" fill="#161616" textLength="4.02" lengthAdjust="spacingAndGlyphs" stroke="#161616" stroke-width="0.05">5</text>
<text x="512.96" y="319.35" font-size="8.2" fill="#161616" textLength="4.48" lengthAdjust="spacingAndGlyphs" stroke="#161616" stroke-width="0.05">¥</text>
<text x="518.75" y="319.35" font-size="8.2" fill="#161616" textLength="9.12" lengthAdjust="spacingAndGlyphs" stroke="#161616" stroke-width="0.05">1.1</text>
<text x="585.26" y="319.35" font-size="8.2" fill="#161616" textLength="4.02" lengthAdjust="spacingAndGlyphs" stroke="#161616" stroke-width="0.05">0</text>
<text x="633.86" y="319.35" font-size="8.2" fill="#161616" textLength="4.48" lengthAdjust="spacingAndGlyphs" stroke="#161616" stroke-width="0.05">¥</text>
<text x="639.86" y="319.35" font-size="8.2" fill="#161616" textLength="10.28" lengthAdjust="spacingAndGlyphs" stroke="#161616" stroke-width="0.05">0.0</text>
<text x="692.45" y="319.35" font-size="8.2" fill="#161616" textLength="4.02" lengthAdjust="spacingAndGlyphs" stroke="#161616" stroke-width="0.05">5</text>
<text x="752.21" y="319.35" font-size="8.2" fill="#161616" textLength="4.48" lengthAdjust="spacingAndGlyphs" stroke="#161616" stroke-width="0.05">¥</text>
<text x="758.00" y="319.35" font-size="8.2" fill="#161616" textLength="9.12" lengthAdjust="spacingAndGlyphs" stroke="#161616" stroke-width="0.05">1.1</text>
<text x="16.16" y="340.40" font-size="8.2" fill="#161616" textLength="71.60" lengthAdjust="spacingAndGlyphs" stroke="#161616" stroke-width="0.15">Parking lot attendant</text>
<text x="125.24" y="339.80" font-size="8.2" fill="#161616" textLength="4.02" lengthAdjust="spacingAndGlyphs" stroke="#161616" stroke-width="0.05">1</text>
<text x="188.84" y="339.80" font-size="8.2" fill="#161616" textLength="4.02" lengthAdjust="spacingAndGlyphs" stroke="#161616" stroke-width="0.05">0</text>
<text x="248.01" y="339.80" font-size="8.2" fill="#161616" textLength="4.48" lengthAdjust="spacingAndGlyphs" stroke="#161616" stroke-width="0.05">¥</text>
<text x="254.01" y="339.80" font-size="8.2" fill="#161616" textLength="10.28" lengthAdjust="spacingAndGlyphs" stroke="#161616" stroke-width="0.05">0.0</text>
<text x="308.44" y="339.80" font-size="8.2" fill="#161616" textLength="4.02" lengthAdjust="spacingAndGlyphs" stroke="#161616" stroke-width="0.05">0</text>
<text x="369.46" y="339.80" font-size="8.2" fill="#161616" textLength="4.48" lengthAdjust="spacingAndGlyphs" stroke="#161616" stroke-width="0.05">¥</text>
<text x="375.46" y="339.80" font-size="8.2" fill="#161616" textLength="10.28" lengthAdjust="spacingAndGlyphs" stroke="#161616" stroke-width="0.05">0.0</text>
<text x="451.31" y="339.80" font-size="8.2" fill="#161616" textLength="4.02" lengthAdjust="spacingAndGlyphs" stroke="#161616" stroke-width="0.05">0</text>
<text x="512.26" y="339.80" font-size="8.2" fill="#161616" textLength="4.48" lengthAdjust="spacingAndGlyphs" stroke="#161616" stroke-width="0.05">¥</text>
<text x="518.26" y="339.80" font-size="8.2" fill="#161616" textLength="10.28" lengthAdjust="spacingAndGlyphs" stroke="#161616" stroke-width="0.05">0.0</text>
<text x="583.29" y="339.80" font-size="8.2" fill="#161616" textLength="8.04" lengthAdjust="spacingAndGlyphs" stroke="#161616" stroke-width="0.05">57</text>
<text x="633.86" y="339.80" font-size="8.2" fill="#161616" textLength="4.48" lengthAdjust="spacingAndGlyphs" stroke="#161616" stroke-width="0.05">¥</text>
<text x="639.86" y="339.80" font-size="8.2" fill="#161616" textLength="10.28" lengthAdjust="spacingAndGlyphs" stroke="#161616" stroke-width="0.05">0.0</text>
<text x="690.46" y="339.80" font-size="8.2" fill="#161616" textLength="8.04" lengthAdjust="spacingAndGlyphs" stroke="#161616" stroke-width="0.05">57</text>
<text x="751.51" y="339.80" font-size="8.2" fill="#161616" textLength="4.48" lengthAdjust="spacingAndGlyphs" stroke="#161616" stroke-width="0.05">¥</text>
<text x="757.51" y="339.80" font-size="8.2" fill="#161616" textLength="10.28" lengthAdjust="spacingAndGlyphs" stroke="#161616" stroke-width="0.05">0.0</text>
<text x="20.23" y="365.50" font-size="8.2" fill="#161616" textLength="63.39" lengthAdjust="spacingAndGlyphs" stroke="#161616" stroke-width="0.15">Other professional</text>
<text x="8.42" y="375.20" font-size="8.2" fill="#161616" textLength="86.85" lengthAdjust="spacingAndGlyphs" stroke="#161616" stroke-width="0.15">dispatching in the control</text>
<text x="40.26" y="385.10" font-size="8.2" fill="#161616" textLength="22.38" lengthAdjust="spacingAndGlyphs" stroke="#161616" stroke-width="0.15">center</text>
<text x="125.24" y="370.45" font-size="8.2" fill="#161616" textLength="4.02" lengthAdjust="spacingAndGlyphs" stroke="#161616" stroke-width="0.05">1</text>
<text x="188.84" y="370.45" font-size="8.2" fill="#161616" textLength="4.02" lengthAdjust="spacingAndGlyphs" stroke="#161616" stroke-width="0.05">0</text>
<text x="248.01" y="370.45" font-size="8.2" fill="#161616" textLength="4.48" lengthAdjust="spacingAndGlyphs" stroke="#161616" stroke-width="0.05">¥</text>
<text x="254.01" y="370.45" font-size="8.2" fill="#161616" textLength="10.28" lengthAdjust="spacingAndGlyphs" stroke="#161616" stroke-width="0.05">0.0</text>
<text x="308.44" y="370.45" font-size="8.2" fill="#161616" textLength="4.02" lengthAdjust="spacingAndGlyphs" stroke="#161616" stroke-width="0.05">0</text>
<text x="369.46" y="370.45" font-size="8.2" fill="#161616" textLength="4.48" lengthAdjust="spacingAndGlyphs" stroke="#161616" stroke-width="0.05">¥</text>
<text x="375.46" y="370.45" font-size="8.2" fill="#161616" textLength="10.28" lengthAdjust="spacingAndGlyphs" stroke="#161616" stroke-width="0.05">0.0</text>
<text x="451.31" y="370.45" font-size="8.2" fill="#161616" textLength="4.02" lengthAdjust="spacingAndGlyphs" stroke="#161616" stroke-width="0.05">0</text>
<text x="512.26" y="370.45" font-size="8.2" fill="#161616" textLength="4.48" lengthAdjust="spacingAndGlyphs" stroke="#161616" stroke-width="0.05">¥</text>
<text x="518.26" y="370.45" font-size="8.2" fill="#161616" textLength="10.28" lengthAdjust="spacingAndGlyphs" stroke="#161616" stroke-width="0.05">0.0</text>
<text x="585.26" y="370.45" font-size="8.2" fill="#161616" textLength="4.02" lengthAdjust="spacingAndGlyphs" stroke="#161616" stroke-width="0.05">2</text>
<text x="633.86" y="370.45" font-size="8.2" fill="#161616" textLength="4.48" lengthAdjust="spacingAndGlyphs" stroke="#161616" stroke-width="0.05">¥</text>
<text x="639.86" y="370.45" font-size="8.2" fill="#161616" textLength="10.28" lengthAdjust="spacingAndGlyphs" stroke="#161616" stroke-width="0.05">0.0</text>
<text x="692.44" y="370.45" font-size="8.2" fill="#161616" textLength="4.02" lengthAdjust="spacingAndGlyphs" stroke="#161616" stroke-width="0.05">2</text>
<text x="751.51" y="370.45" font-size="8.2" fill="#161616" textLength="4.48" lengthAdjust="spacingAndGlyphs" stroke="#161616" stroke-width="0.05">¥</text>
<text x="757.51" y="370.45" font-size="8.2" fill="#161616" textLength="10.28" lengthAdjust="spacingAndGlyphs" stroke="#161616" stroke-width="0.05">0.0</text>
<text x="18.74" y="406.20" font-size="8.2" fill="#161616" textLength="66.04" lengthAdjust="spacingAndGlyphs" stroke="#161616" stroke-width="0.15">Analog telephone 1</text>
<text x="125.24" y="401.05" font-size="8.2" fill="#161616" textLength="4.02" lengthAdjust="spacingAndGlyphs" stroke="#161616" stroke-width="0.05">1</text>
<text x="188.84" y="401.05" font-size="8.2" fill="#161616" textLength="4.02" lengthAdjust="spacingAndGlyphs" stroke="#161616" stroke-width="0.05">0</text>
<text x="248.01" y="401.05" font-size="8.2" fill="#161616" textLength="4.48" lengthAdjust="spacingAndGlyphs" stroke="#161616" stroke-width="0.05">¥</text>
<text x="254.01" y="401.05" font-size="8.2" fill="#161616" textLength="10.28" lengthAdjust="spacingAndGlyphs" stroke="#161616" stroke-width="0.05">0.0</text>
<text x="308.44" y="401.05" font-size="8.2" fill="#161616" textLength="4.02" lengthAdjust="spacingAndGlyphs" stroke="#161616" stroke-width="0.05">0</text>
<text x="369.46" y="401.05" font-size="8.2" fill="#161616" textLength="4.48" lengthAdjust="spacingAndGlyphs" stroke="#161616" stroke-width="0.05">¥</text>
<text x="375.46" y="401.05" font-size="8.2" fill="#161616" textLength="10.28" lengthAdjust="spacingAndGlyphs" stroke="#161616" stroke-width="0.05">0.0</text>
<text x="451.21" y="401.05" font-size="8.2" fill="#161616" textLength="4.02" lengthAdjust="spacingAndGlyphs" stroke="#161616" stroke-width="0.05">1</text>
<text x="510.63" y="401.05" font-size="8.2" fill="#161616" textLength="4.48" lengthAdjust="spacingAndGlyphs" stroke="#161616" stroke-width="0.05">¥</text>
<text x="516.65" y="401.05" font-size="8.2" fill="#161616" textLength="13.57" lengthAdjust="spacingAndGlyphs" stroke="#161616" stroke-width="0.05">0.22</text>
<text x="585.26" y="401.05" font-size="8.2" fill="#161616" textLength="4.02" lengthAdjust="spacingAndGlyphs" stroke="#161616" stroke-width="0.05">0</text>
<text x="633.86" y="401.05" font-size="8.2" fill="#161616" textLength="4.48" lengthAdjust="spacingAndGlyphs" stroke="#161616" stroke-width="0.05">¥</text>
<text x="639.86" y="401.05" font-size="8.2" fill="#161616" textLength="10.28" lengthAdjust="spacingAndGlyphs" stroke="#161616" stroke-width="0.05">0.0</text>
<text x="692.34" y="401.05" font-size="8.2" fill="#161616" textLength="4.02" lengthAdjust="spacingAndGlyphs" stroke="#161616" stroke-width="0.05">1</text>
<text x="749.88" y="401.05" font-size="8.2" fill="#161616" textLength="4.48" lengthAdjust="spacingAndGlyphs" stroke="#161616" stroke-width="0.05">¥</text>
<text x="755.90" y="401.05" font-size="8.2" fill="#161616" textLength="13.57" lengthAdjust="spacingAndGlyphs" stroke="#161616" stroke-width="0.05">0.22</text>
<text x="22.67" y="421.90" font-size="8.2" fill="#161616" textLength="57.82" lengthAdjust="spacingAndGlyphs" stroke="#161616" stroke-width="0.15">System duty desk</text>
<text x="125.24" y="421.30" font-size="8.2" fill="#161616" textLength="4.02" lengthAdjust="spacingAndGlyphs" stroke="#161616" stroke-width="0.05">1</text>
<text x="188.84" y="421.30" font-size="8.2" fill="#161616" textLength="4.02" lengthAdjust="spacingAndGlyphs" stroke="#161616" stroke-width="0.05">0</text>
<text x="248.01" y="421.30" font-size="8.2" fill="#161616" textLength="4.48" lengthAdjust="spacingAndGlyphs" stroke="#161616" stroke-width="0.05">¥</text>
<text x="254.01" y="421.30" font-size="8.2" fill="#161616" textLength="10.28" lengthAdjust="spacingAndGlyphs" stroke="#161616" stroke-width="0.05">0.0</text>
<text x="308.44" y="421.30" font-size="8.2" fill="#161616" textLength="4.02" lengthAdjust="spacingAndGlyphs" stroke="#161616" stroke-width="0.05">0</text>
<text x="369.46" y="421.30" font-size="8.2" fill="#161616" textLength="4.48" lengthAdjust="spacingAndGlyphs" stroke="#161616" stroke-width="0.05">¥</text>
<text x="375.46" y="421.30" font-size="8.2" fill="#161616" textLength="10.28" lengthAdjust="spacingAndGlyphs" stroke="#161616" stroke-width="0.05">0.0</text>
<text x="451.21" y="421.30" font-size="8.2" fill="#161616" textLength="4.02" lengthAdjust="spacingAndGlyphs" stroke="#161616" stroke-width="0.05">1</text>
<text x="510.63" y="421.30" font-size="8.2" fill="#161616" textLength="4.48" lengthAdjust="spacingAndGlyphs" stroke="#161616" stroke-width="0.05">¥</text>
<text x="516.65" y="421.30" font-size="8.2" fill="#161616" textLength="13.57" lengthAdjust="spacingAndGlyphs" stroke="#161616" stroke-width="0.05">0.22</text>
<text x="583.12" y="421.30" font-size="8.2" fill="#161616" textLength="8.04" lengthAdjust="spacingAndGlyphs" stroke="#161616" stroke-width="0.05">10</text>
<text x="633.86" y="421.30" font-size="8.2" fill="#161616" textLength="4.48" lengthAdjust="spacingAndGlyphs" stroke="#161616" stroke-width="0.05">¥</text>
<text x="639.86" y="421.30" font-size="8.2" fill="#161616" textLength="10.28" lengthAdjust="spacingAndGlyphs" stroke="#161616" stroke-width="0.05">0.0</text>
<text x="690.33" y="421.30" font-size="8.2" fill="#161616" textLength="8.04" lengthAdjust="spacingAndGlyphs" stroke="#161616" stroke-width="0.05">11</text>
<text x="749.88" y="421.30" font-size="8.2" fill="#161616" textLength="4.48" lengthAdjust="spacingAndGlyphs" stroke="#161616" stroke-width="0.05">¥</text>
<text x="755.90" y="421.30" font-size="8.2" fill="#161616" textLength="13.57" lengthAdjust="spacingAndGlyphs" stroke="#161616" stroke-width="0.05">0.22</text>
<text x="23.57" y="441.95" font-size="8.2" fill="#161616" textLength="56.48" lengthAdjust="spacingAndGlyphs" stroke="#161616" stroke-width="0.15">Traffic attendant</text>
<text x="125.24" y="441.35" font-size="8.2" fill="#161616" textLength="4.02" lengthAdjust="spacingAndGlyphs" stroke="#161616" stroke-width="0.05">1</text>
<text x="188.84" y="441.35" font-size="8.2" fill="#161616" textLength="4.02" lengthAdjust="spacingAndGlyphs" stroke="#161616" stroke-width="0.05">0</text>
<text x="248.01" y="441.35" font-size="8.2" fill="#161616" textLength="4.48" lengthAdjust="spacingAndGlyphs" stroke="#161616" stroke-width="0.05">¥</text>
<text x="254.01" y="441.35" font-size="8.2" fill="#161616" textLength="10.28" lengthAdjust="spacingAndGlyphs" stroke="#161616" stroke-width="0.05">0.0</text>
<text x="308.44" y="441.35" font-size="8.2" fill="#161616" textLength="4.02" lengthAdjust="spacingAndGlyphs" stroke="#161616" stroke-width="0.05">0</text>
<text x="369.46" y="441.35" font-size="8.2" fill="#161616" textLength="4.48" lengthAdjust="spacingAndGlyphs" stroke="#161616" stroke-width="0.05">¥</text>
<text x="375.46" y="441.35" font-size="8.2" fill="#161616" textLength="10.28" lengthAdjust="spacingAndGlyphs" stroke="#161616" stroke-width="0.05">0.0</text>
<text x="451.21" y="441.35" font-size="8.2" fill="#161616" textLength="4.02" lengthAdjust="spacingAndGlyphs" stroke="#161616" stroke-width="0.05">1</text>
<text x="510.63" y="441.35" font-size="8.2" fill="#161616" textLength="4.48" lengthAdjust="spacingAndGlyphs" stroke="#161616" stroke-width="0.05">¥</text>
<text x="516.65" y="441.35" font-size="8.2" fill="#161616" textLength="13.57" lengthAdjust="spacingAndGlyphs" stroke="#161616" stroke-width="0.05">0.22</text>
<text x="583.14" y="441.35" font-size="8.2" fill="#161616" textLength="8.04" lengthAdjust="spacingAndGlyphs" stroke="#161616" stroke-width="0.05">13</text>
<text x="633.86" y="441.35" font-size="8.2" fill="#161616" textLength="4.48" lengthAdjust="spacingAndGlyphs" stroke="#161616" stroke-width="0.05">¥</text>
<text x="639.86" y="441.35" font-size="8.2" fill="#161616" textLength="10.28" lengthAdjust="spacingAndGlyphs" stroke="#161616" stroke-width="0.05">0.0</text>
<text x="690.26" y="441.35" font-size="8.2" fill="#161616" textLength="8.04" lengthAdjust="spacingAndGlyphs" stroke="#161616" stroke-width="0.05">14</text>
<text x="749.88" y="441.35" font-size="8.2" fill="#161616" textLength="4.48" lengthAdjust="spacingAndGlyphs" stroke="#161616" stroke-width="0.05">¥</text>
<text x="755.90" y="441.35" font-size="8.2" fill="#161616" textLength="13.57" lengthAdjust="spacingAndGlyphs" stroke="#161616" stroke-width="0.05">0.22</text>
<text x="23.57" y="462.10" font-size="8.2" fill="#161616" textLength="56.48" lengthAdjust="spacingAndGlyphs" stroke="#161616" stroke-width="0.15">Traffic attendant</text>
<text x="125.24" y="461.50" font-size="8.2" fill="#161616" textLength="4.02" lengthAdjust="spacingAndGlyphs" stroke="#161616" stroke-width="0.05">1</text>
<text x="188.84" y="461.50" font-size="8.2" fill="#161616" textLength="4.02" lengthAdjust="spacingAndGlyphs" stroke="#161616" stroke-width="0.05">0</text>
<text x="248.01" y="461.50" font-size="8.2" fill="#161616" textLength="4.48" lengthAdjust="spacingAndGlyphs" stroke="#161616" stroke-width="0.05">¥</text>
<text x="254.01" y="461.50" font-size="8.2" fill="#161616" textLength="10.28" lengthAdjust="spacingAndGlyphs" stroke="#161616" stroke-width="0.05">0.0</text>
<text x="308.44" y="461.50" font-size="8.2" fill="#161616" textLength="4.02" lengthAdjust="spacingAndGlyphs" stroke="#161616" stroke-width="0.05">0</text>
<text x="369.46" y="461.50" font-size="8.2" fill="#161616" textLength="4.48" lengthAdjust="spacingAndGlyphs" stroke="#161616" stroke-width="0.05">¥</text>
<text x="375.46" y="461.50" font-size="8.2" fill="#161616" textLength="10.28" lengthAdjust="spacingAndGlyphs" stroke="#161616" stroke-width="0.05">0.0</text>
<text x="451.31" y="461.50" font-size="8.2" fill="#161616" textLength="4.02" lengthAdjust="spacingAndGlyphs" stroke="#161616" stroke-width="0.05">2</text>
<text x="510.63" y="461.50" font-size="8.2" fill="#161616" textLength="4.48" lengthAdjust="spacingAndGlyphs" stroke="#161616" stroke-width="0.05">¥</text>
<text x="516.66" y="461.50" font-size="8.2" fill="#161616" textLength="13.42" lengthAdjust="spacingAndGlyphs" stroke="#161616" stroke-width="0.05">0.44</text>
<text x="583.23" y="461.50" font-size="8.2" fill="#161616" textLength="8.04" lengthAdjust="spacingAndGlyphs" stroke="#161616" stroke-width="0.05">73</text>
<text x="633.86" y="461.50" font-size="8.2" fill="#161616" textLength="4.48" lengthAdjust="spacingAndGlyphs" stroke="#161616" stroke-width="0.05">¥</text>
<text x="639.86" y="461.50" font-size="8.2" fill="#161616" textLength="10.28" lengthAdjust="spacingAndGlyphs" stroke="#161616" stroke-width="0.05">0.0</text>
<text x="690.39" y="461.50" font-size="8.2" fill="#161616" textLength="8.04" lengthAdjust="spacingAndGlyphs" stroke="#161616" stroke-width="0.05">75</text>
<text x="749.88" y="461.50" font-size="8.2" fill="#161616" textLength="4.48" lengthAdjust="spacingAndGlyphs" stroke="#161616" stroke-width="0.05">¥</text>
<text x="755.91" y="461.50" font-size="8.2" fill="#161616" textLength="13.42" lengthAdjust="spacingAndGlyphs" stroke="#161616" stroke-width="0.05">0.44</text>
<text x="19.98" y="482.30" font-size="8.2" fill="#161616" textLength="63.61" lengthAdjust="spacingAndGlyphs" stroke="#161616" stroke-width="0.15">Dispatch extension</text>
<text x="125.24" y="481.70" font-size="8.2" fill="#161616" textLength="4.02" lengthAdjust="spacingAndGlyphs" stroke="#161616" stroke-width="0.05">1</text>
<text x="188.84" y="481.70" font-size="8.2" fill="#161616" textLength="4.02" lengthAdjust="spacingAndGlyphs" stroke="#161616" stroke-width="0.05">0</text>
<text x="248.01" y="481.70" font-size="8.2" fill="#161616" textLength="4.48" lengthAdjust="spacingAndGlyphs" stroke="#161616" stroke-width="0.05">¥</text>
<text x="254.01" y="481.70" font-size="8.2" fill="#161616" textLength="10.28" lengthAdjust="spacingAndGlyphs" stroke="#161616" stroke-width="0.05">0.0</text>
<text x="308.44" y="481.70" font-size="8.2" fill="#161616" textLength="4.02" lengthAdjust="spacingAndGlyphs" stroke="#161616" stroke-width="0.05">0</text>
<text x="369.46" y="481.70" font-size="8.2" fill="#161616" textLength="4.48" lengthAdjust="spacingAndGlyphs" stroke="#161616" stroke-width="0.05">¥</text>
<text x="375.46" y="481.70" font-size="8.2" fill="#161616" textLength="10.28" lengthAdjust="spacingAndGlyphs" stroke="#161616" stroke-width="0.05">0.0</text>
<text x="451.21" y="481.70" font-size="8.2" fill="#161616" textLength="4.02" lengthAdjust="spacingAndGlyphs" stroke="#161616" stroke-width="0.05">1</text>
<text x="510.63" y="481.70" font-size="8.2" fill="#161616" textLength="4.48" lengthAdjust="spacingAndGlyphs" stroke="#161616" stroke-width="0.05">¥</text>
<text x="516.65" y="481.70" font-size="8.2" fill="#161616" textLength="13.57" lengthAdjust="spacingAndGlyphs" stroke="#161616" stroke-width="0.05">0.22</text>
<text x="583.23" y="481.70" font-size="8.2" fill="#161616" textLength="8.04" lengthAdjust="spacingAndGlyphs" stroke="#161616" stroke-width="0.05">23</text>
<text x="633.86" y="481.70" font-size="8.2" fill="#161616" textLength="4.48" lengthAdjust="spacingAndGlyphs" stroke="#161616" stroke-width="0.05">¥</text>
<text x="639.86" y="481.70" font-size="8.2" fill="#161616" textLength="10.28" lengthAdjust="spacingAndGlyphs" stroke="#161616" stroke-width="0.05">0.0</text>
<text x="690.35" y="481.70" font-size="8.2" fill="#161616" textLength="8.04" lengthAdjust="spacingAndGlyphs" stroke="#161616" stroke-width="0.05">24</text>
<text x="749.88" y="481.70" font-size="8.2" fill="#161616" textLength="4.48" lengthAdjust="spacingAndGlyphs" stroke="#161616" stroke-width="0.05">¥</text>
<text x="755.90" y="481.70" font-size="8.2" fill="#161616" textLength="13.57" lengthAdjust="spacingAndGlyphs" stroke="#161616" stroke-width="0.05">0.22</text>
</svg></body></html>
